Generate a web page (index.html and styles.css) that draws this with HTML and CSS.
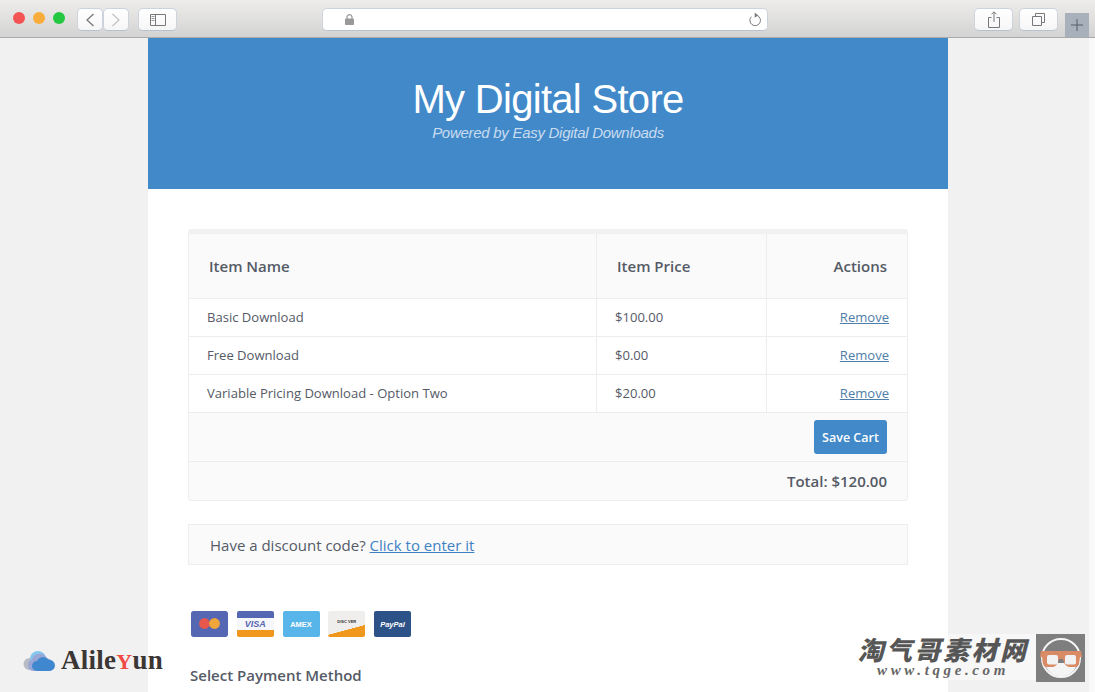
FILE: index.html
```html
<!DOCTYPE html>
<html lang="en">
<head>
<meta charset="utf-8">
<title>My Digital Store</title>
<link rel="stylesheet" href="styles.css">
</head>
<body>
<header class="chrome">
  <div class="lights"><i class="light red"></i><i class="light amber"></i><i class="light green"></i></div>
  <div class="nav-group">
    <span class="btn btn-nav"><svg width="12" height="16" viewBox="0 0 12 16"><path d="M9.500 2 3 8l6.500 6" fill="none" stroke="#77787c" stroke-width="1.300"/></svg></span>
    <span class="btn btn-nav"><svg width="12" height="16" viewBox="0 0 12 16"><path d="M2.500 2 9 8l-6.500 6" fill="none" stroke="#c2c3c6" stroke-width="1.300"/></svg></span>
  </div>
  <span class="btn btn-side"><svg width="16" height="12" viewBox="0 0 16 12"><path d="M.5.500h15v11H.5zM5.500.500v11" fill="none" stroke="#77787c"/><path d="M1.500 2.500h3M1.500 4.500h3M1.500 6.500h3" stroke="#9a9b9e"/></svg></span>
  <div class="address">
    <svg class="lock" width="9" height="11" viewBox="0 0 9 11"><path d="M2 5V3.200a2.500 2.500 0 0 1 5 0V5" fill="none" stroke="#999" stroke-width="1.200"/><rect y="4.500" width="9" height="6.500" rx=".8" fill="#999"/></svg>
    <svg class="reload" width="14" height="15" viewBox="0 0 14 15"><path d="M8.800 3.300A5.300 5.300 0 1 1 3.300 4.700" fill="none" stroke="#77787c"/><path d="M6.700.8 10.200 3.300 6.700 5.800z" fill="#77787c"/></svg>
  </div>
  <span class="btn btn-tool"><svg width="12" height="17" viewBox="0 0 12 17"><path d="M3.500 6.500H.5v10h11v-10h-3M6 11V1M3.500 3.300 6 .8l2.500 2.500" fill="none" stroke="#77787c"/></svg></span>
  <span class="btn btn-tool btn-tabs"><svg width="13" height="13" viewBox="0 0 13 13"><path d="M.5 3.500h9v9h-9zM3.500 3.500v-3h9v9h-3" fill="none" stroke="#77787c"/></svg></span>
  <span class="new-tab"><svg width="12" height="12" viewBox="0 0 12 12"><path d="M6 0v12M0 6h12" stroke="#55606c"/></svg></span>
</header>

<div class="viewport">
  <main class="page">
    <section class="hero">
      <h1 class="store-title">My Digital Store</h1>
      <p class="store-sub">Powered by Easy Digital Downloads</p>
    </section>
    <section class="content">
      <table class="cart">
        <thead>
          <tr><th class="col-name">Item Name</th><th class="col-price">Item Price</th><th class="col-act">Actions</th></tr>
        </thead>
        <tbody>
          <tr><td>Basic Download</td><td>$100.00</td><td class="act"><a href="#">Remove</a></td></tr>
          <tr><td>Free Download</td><td>$0.00</td><td class="act"><a href="#">Remove</a></td></tr>
          <tr><td>Variable Pricing Download - Option Two</td><td>$20.00</td><td class="act"><a href="#">Remove</a></td></tr>
        </tbody>
        <tfoot>
          <tr class="save-row"><th colspan="3"><button class="save" type="button">Save Cart</button></th></tr>
          <tr class="total-row"><th colspan="3">Total: $120.00</th></tr>
        </tfoot>
      </table>
      <p class="discount">Have a discount code? <a href="#">Click to enter it</a></p>
      <div class="cards">
        <svg class="card" width="37" height="26" viewBox="0 0 37 26"><rect width="37" height="26" rx="2" fill="#5566b2"/><circle cx="13.500" cy="12.500" r="5.400" fill="#e8574c"/><circle cx="23.500" cy="12.500" r="5.400" fill="#f0a63a"/></svg>
        <div class="card card-visa"><span>VISA</span></div>
        <div class="card card-amex"><span>AMEX</span></div>
        <div class="card card-disc"><span>DISC VER</span></div>
        <div class="card card-paypal"><span>PayPal</span></div>
      </div>
      <h3 class="pay-title">Select Payment Method</h3>
    </section>
  </main>
</div>

<div class="scroll-strip"></div>

<div class="mark-ali">
  <svg width="34" height="22" viewBox="0 0 34 22"><circle cx="6.500" cy="14" r="6" fill="#b9bcc4"/><circle cx="15" cy="9" r="8" fill="#85c6ee"/><path d="M10 21a6 6 0 0 1-1-11.500 8 8 0 0 1 15-1A6.500 6.500 0 0 1 26 21z" fill="#9aa7d6"/><path d="M14 21a5 5 0 0 1 0-10 7 7 0 0 1 12-1 5.500 5.500 0 0 1 1 11z" fill="#3f88cf"/></svg>
  <span class="ali-text">Alile<b>Y</b>un</span>
</div>

<div class="mark-tq">
  <div class="tq-words">
    <span class="tq-cn">淘气哥素材网</span>
    <span class="tq-url">www.tqge.com</span>
  </div>
  <div class="tq-logo">
    <svg width="49" height="48" viewBox="0 0 49 48"><circle cx="25" cy="24" r="19" fill="none" stroke="#f4f4f4" stroke-width="2"/><path d="M9 30a16.500 16.500 0 0 0 32 0l-3-1H12z" fill="#f4f4f4"/><path d="M5 17h40l1 6h-2l-1 7q-1 3-4 3h-6q-4-1-5-5l-1-3h-4l-1 3q-1 4-5 5h-6q-3 0-4-3l-1-7H4z" fill="#d98b66"/><rect x="11" y="21" width="11" height="9.500" rx="2" fill="#f2f2f2"/><rect x="29" y="21" width="11" height="9.500" rx="2" fill="#f2f2f2"/></svg>
  </div>
</div>
</body>
</html>
```
FILE: styles.css
```css
* { box-sizing: border-box; }
html, body { margin: 0; height: 692px; overflow: hidden; }
body { background: #f1f1f1; font-family: "Open Sans", sans-serif; color: #555a66; position: relative; }

.chrome {
  height: 38px; display: flex; align-items: flex-start; padding: 8px 0 0 13px;
  background: linear-gradient(#eeedeb, #d3d3d3); border-bottom: 1px solid #a9a9a9;
}
.lights { display: flex; gap: 8px; padding-top: 4px; }
.light { width: 12px; height: 12px; border-radius: 50%; display: block; }
.red { background: #f45353; }
.amber { background: #f8ad3a; }
.green { background: #24c840; }
.btn {
  height: 23px; background: linear-gradient(#fff, #f6f6f6); border: 1px solid #cdd3dd; border-bottom-color: #b9c0cf;
  border-radius: 5px; display: flex; align-items: center; justify-content: center;
}
.nav-group { display: flex; margin-left: 12px; }
.btn-nav { width: 26px; }
.btn-side { width: 39px; margin-left: 9px; }
.address {
  width: 446px; height: 23px; margin-left: 145px; background: #fff; border: 1px solid #cdd3dd; border-bottom-color: #b9c0cf;
  border-radius: 5px; display: flex; align-items: center; justify-content: space-between; padding: 0 5px 0 22px;
}
.btn-tool { width: 39px; margin-left: 206px; }
.btn-tabs { margin-left: 6px; }
.new-tab {
  width: 24px; height: 24px; margin: 5px 0 0 7px; background: #a8b0bc; display: flex; align-items: center; justify-content: center;
}
.viewport { display: flex; padding-left: 148px; }
.page { width: 800px; height: 654px; background: #fff; overflow: hidden; }
.hero { height: 151px; background: #4189c9; color: #fff; text-align: center; padding-top: 36px; }
.store-title { margin: 0; font: 300 40px/51px "Liberation Sans", sans-serif; letter-spacing: -.7px; }
.store-sub { margin: -1px 0 0; font: italic 300 15px/18px "Liberation Sans", sans-serif; color: #c9dcef; letter-spacing: -.28px; }
.content { padding: 40px 40px 0; }
.cart {
  width: 720px; table-layout: fixed; border-collapse: separate; border-spacing: 0; border: 1px solid #ededed; border-top: 5px solid #f1f1f1;
  border-radius: 3px; font-size: 13.050px;
}
.cart th, .cart td { border-bottom: 1px solid #ededed; border-right: 1px solid #ededed; text-align: left; }
.cart th:last-child, .cart td:last-child { border-right: 0; }
.cart thead th, .cart tfoot th { background: #fafafa; color: #555a66; }
.cart thead th { height: 65px; padding: 0 20px; font-size: 15px; font-weight: 600; }
.col-name { width: 408px; }
.col-price { width: 170px; }
.cart thead .col-act { text-align: right; }
.cart td { height: 38px; padding: 0 18px 2px; color: #555a66; }
.cart .act { text-align: right; }
.act a { color: #4f7ea8; }
.cart tfoot th { text-align: right; padding: 0 20px; }
.save-row th { height: 49px; }
.cart .total-row th { height: 38px; border-bottom: 0; font-size: 15px; font-weight: 600; }
.save {
  height: 34px; width: 73px; padding: 0; border: 0; border-radius: 3px; background: #4189c9; color: #fff;
  font: 600 12.500px "Open Sans", sans-serif; vertical-align: middle;
}
.discount {
  margin: 23px 0 0; height: 41px; border: 1px solid #ededed; background: #fafafa; padding: 0 21px;
  font-size: 15px; line-height: 40px; color: #555a66;
}
.discount a { color: #3f82c4; }
.cards { display: flex; gap: 8.750px; margin: 46px 0 0 3px; }
.card {
  width: 37px; height: 26px; border-radius: 2px; display: flex; align-items: center; justify-content: center;
  font: italic 700 8px "Liberation Sans", sans-serif; color: #fff; flex: none;
}
.card-visa { background: linear-gradient(#5566b2 0 7px, #f6f7fb 7px 19px, #f0981c 19px); color: #5566b2; font-size: 9px; }
.card-amex { background: #57b5ea; font-style: normal; font-size: 7.500px; }
.card-disc { background: linear-gradient(165deg, #efeeec 0 66%, #f0981c 67%); color: #333; font-size: 4px; font-style: normal; padding-bottom: 6px; }
.card-paypal { background: #2c5288; font-size: 7.500px; }
.pay-title { margin: 28px 0 0 2px; font-size: 15px; line-height: 20px; font-weight: 600; color: #555a66; }

.scroll-strip { position: absolute; top: 38px; right: 0; width: 6px; height: 654px; background: #f9f9f9; }
.mark-ali { position: absolute; left: 23px; top: 648px; display: flex; align-items: center; gap: 4px; }
.ali-text { font: 700 27px/24px "Liberation Serif", serif; color: #3b3634; letter-spacing: .25px; }
.ali-text b { color: #ef4a44; font-size: 22px; }
.mark-tq { position: absolute; left: 850px; top: 634px; width: 235px; display: flex; justify-content: space-between; }
.tq-words { width: 186px; height: 46px; display: flex; flex-direction: column; align-items: center; background: linear-gradient(90deg, transparent 0 98px, #f7f7f7 98px); }
.tq-cn { font: italic 900 26px/29px "Noto Sans CJK SC", sans-serif; color: #565656; letter-spacing: 2.500px; white-space: nowrap; }
.tq-url { font: italic 700 15px/15px "Liberation Serif", serif; color: #666; letter-spacing: 3.600px; white-space: nowrap; }
.tq-logo { width: 49px; height: 48px; background: #7e7e7e; }
```
